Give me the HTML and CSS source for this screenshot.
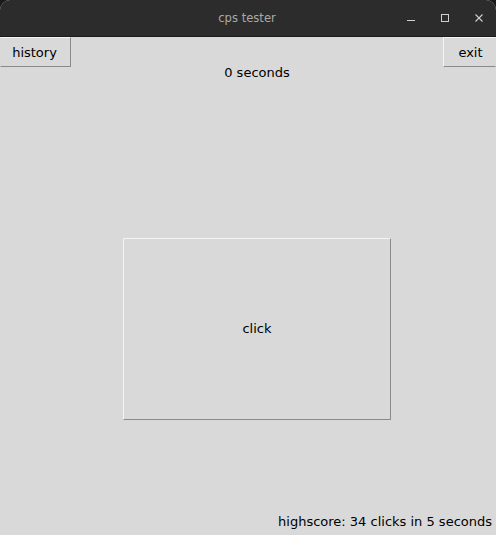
FILE: index.html
```html
<!DOCTYPE html>
<html>
<head>
<meta charset="utf-8">
<link rel="stylesheet" href="styles.css">
</head>
<body>
<div class="window">
  <div class="titlebar">
    <div class="title">cps tester</div>
    <div class="controls">
      <svg class="ctl" width="10" height="10" viewBox="0 0 10 10"><line x1="1" y1="7.5" x2="9" y2="7.5" stroke="#cfcfcf" stroke-width="1"/></svg>
      <svg class="ctl" width="10" height="10" viewBox="0 0 10 10"><rect x="1.5" y="1.5" width="7" height="7" fill="none" stroke="#cfcfcf" stroke-width="1"/></svg>
      <svg class="ctl" width="10" height="10" viewBox="0 0 10 10"><path d="M1.5 1.5 L8.5 8.5 M8.5 1.5 L1.5 8.5" stroke="#cfcfcf" stroke-width="1.1"/></svg>
    </div>
  </div>
  <div class="content">
    <div class="toprow">
      <button class="btn history">history</button>
      <div class="timer">0 seconds</div>
      <button class="btn exit">exit</button>
    </div>
    <div class="middle">
      <button class="btn clickbtn">click</button>
    </div>
    <div class="highscore">highscore: 34 clicks in 5 seconds</div>
  </div>
</div>
</body>
</html>
```
FILE: styles.css
```css
html, body {
  margin: 0;
  padding: 0;
  background: #1a1a1a;
}
.window {
  width: 496px;
  height: 535px;
  display: flex;
  flex-direction: column;
  background: #d9d9d9;
  border-radius: 10px 10px 0 0;
  overflow: hidden;
  font-family: "DejaVu Sans", sans-serif;
  font-size: 13px;
  color: #000;
}
.titlebar {
  height: 36px;
  background: #2c2c2c;
  border-bottom: 1px solid #1b1b1b;
  position: relative;
  display: flex;
  align-items: center;
  justify-content: center;
  flex-shrink: 0;
}
.title {
  color: #a9a9a9;
  font-size: 11.6px;
  margin-left: -2px;
}
.controls {
  position: absolute;
  right: 12px;
  top: 13px;
  display: flex;
  gap: 24px;
}
.ctl { display: block; }
.content {
  flex: 1;
  display: flex;
  flex-direction: column;
}
.toprow {
  display: flex;
  justify-content: space-between;
  align-items: flex-start;
  height: 30px;
}
.btn {
  font-family: "DejaVu Sans", sans-serif;
  font-size: 13px;
  background: #d9d9d9;
  color: #000;
  border: 1px solid;
  border-color: #f4f4f4 #8a8a8a #8a8a8a #f4f4f4;
  padding: 0;
  margin: 0;
  box-sizing: border-box;
}
.history {
  width: 71px;
  height: 30px;
  border-left-color: #d9d9d9;
  padding-right: 2px;
}
.exit {
  width: 53px;
  height: 30px;
  border-right-color: #d9d9d9;
  padding-left: 2px;
}
.timer {
  padding-top: 28px;
  padding-right: 0;
  line-height: 16px;
}
.middle {
  flex: 1;
  display: flex;
  justify-content: center;
  align-items: flex-start;
  padding-top: 171px;
  padding-left: 18px;
}
.clickbtn {
  width: 268px;
  height: 182px;
  padding-bottom: 2px;
}
.highscore {
  text-align: right;
  padding-right: 4px;
  line-height: 16px;
  padding-bottom: 5px;
}
```
